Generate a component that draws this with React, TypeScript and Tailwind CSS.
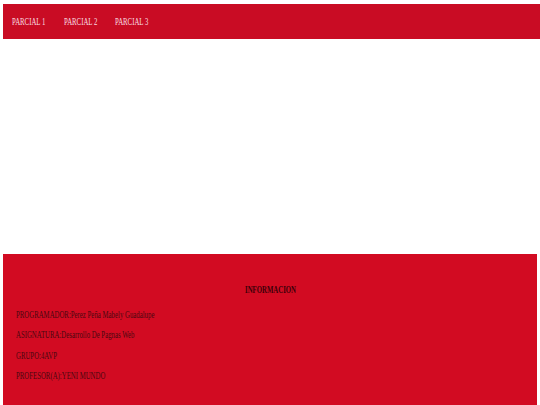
const parciales = ["PARCIAL 1", "PARCIAL 2", "PARCIAL 3"];

const datos = [
  "PROGRAMADOR:Perez Peña Mabely Guadalupe",
  "ASIGNATURA:Desarrollo De Pagnas Web",
  "GRUPO:4AVP",
  "PROFESOR(A):YENI MUNDO",
];

export default function App() {
  return (
    <div className="min-h-[405px] bg-white pt-[4px] font-['Liberation_Serif',serif]">
      {/* barra de navegacion */}
      <nav className="ml-[3px] flex h-[35px] items-center bg-[#c90c24] pb-[3px] pl-[9px]">
        {parciales.map((p) => (
          <span key={p} className="w-[51.5px] whitespace-nowrap leading-none">
            <span className="inline-block origin-left scale-x-[0.68] text-[10px] text-[#f8dde0]">
              {p}
            </span>
          </span>
        ))}
      </nav>

      {/* contenido vacio */}
      <main className="h-[215px]" />

      {/* pie con informacion */}
      <footer className="ml-[3px] h-[170px] w-[534px] bg-[#d20b22] pt-[24px]">
        <div className="h-[20px] text-center leading-[20px]">
          <span className="inline-block scale-x-[0.68] text-[10px] font-bold text-[#3a0008]">
            INFORMACION
          </span>
        </div>
        <div className="mt-[5px] pl-[13px]">
          {datos.map((d) => (
            <div key={d} className="h-[20.3px] whitespace-nowrap leading-[20px]">
              <span className="inline-block origin-left scale-x-[0.68] text-[10px] text-[#4a0810]">
                {d}
              </span>
            </div>
          ))}
        </div>
      </footer>
    </div>
  );
}
